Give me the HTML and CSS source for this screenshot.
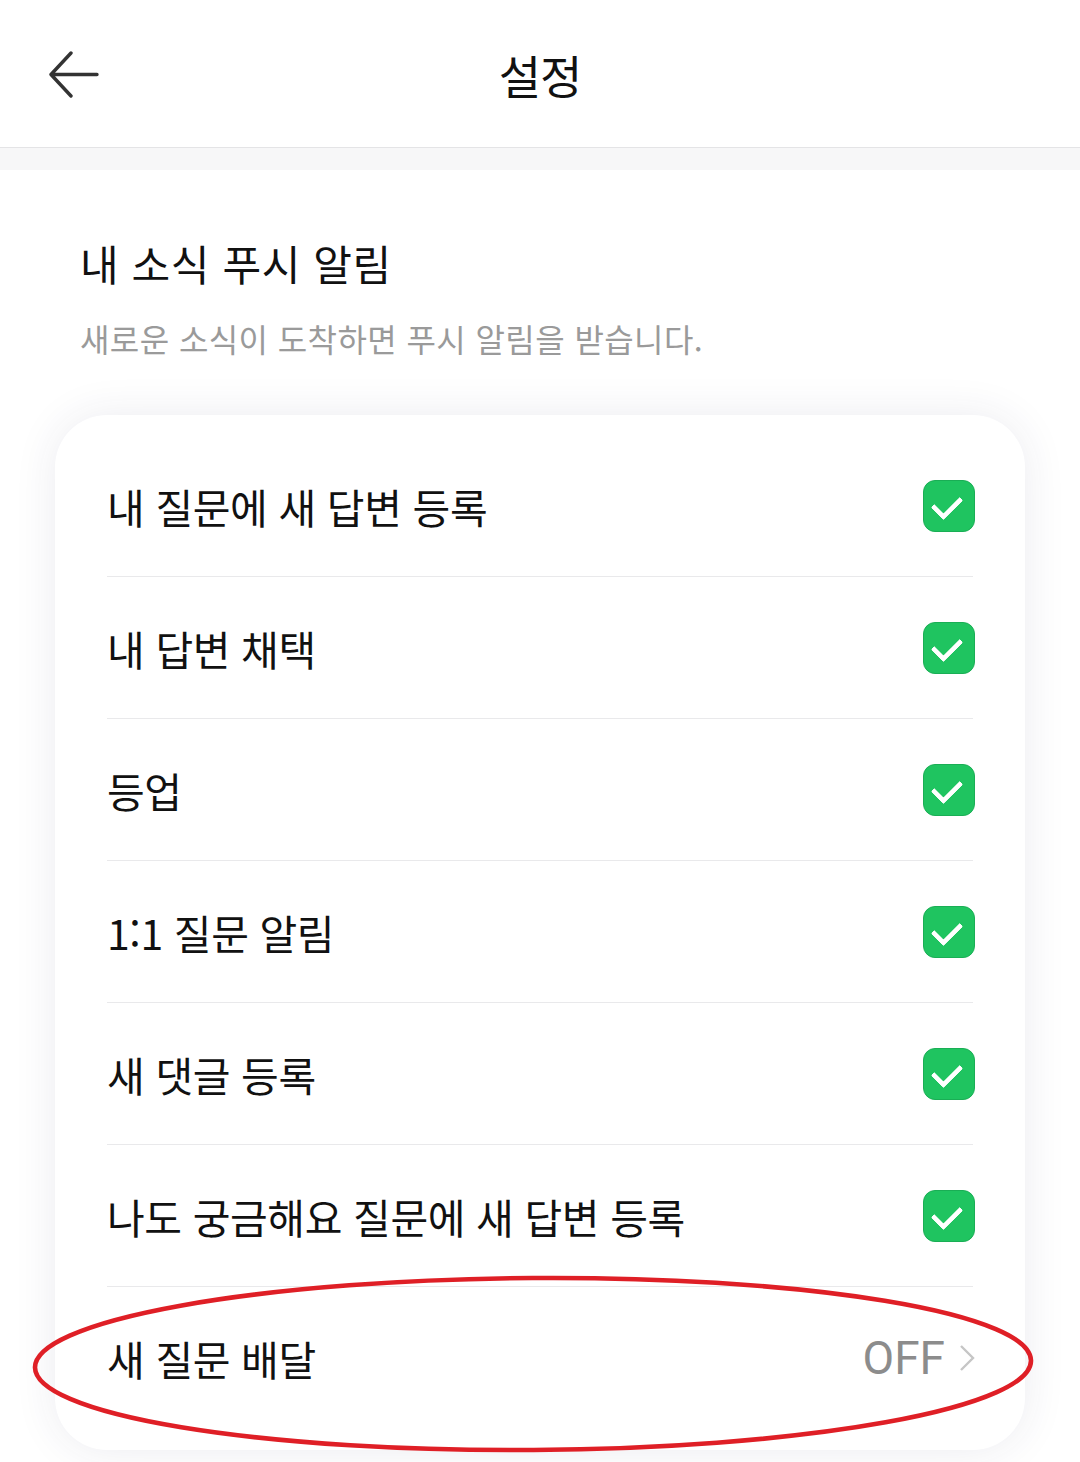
FILE: index.html
```html
<!DOCTYPE html>
<html lang="ko">
<head>
  <meta charset="UTF-8" />
  <meta name="viewport" content="width=device-width, initial-scale=1.0"/>
  <title>설정</title>
  <link rel="stylesheet" href="styles.css">
</head>
<body>
  <header class="topbar">
    <button class="back" aria-label="뒤로">
      <svg width="52" height="48" viewBox="0 0 52 48">
        <path d="M49 23.5H4M23 2 3 23.5 23 45" fill="none" stroke="#333" stroke-width="3.4" stroke-linecap="round" stroke-linejoin="round"/>
      </svg>
    </button>
    <h1>설정</h1>
  </header>
  <div class="band"></div>

  <main class="section">
    <h2>내 소식 푸시 알림</h2>
    <p class="desc">새로운 소식이 도착하면 푸시 알림을 받습니다.</p>

    <div class="card">
      <div class="row"><span>내 질문에 새 답변 등록</span><span class="check"></span></div>
      <div class="row"><span>내 답변 채택</span><span class="check"></span></div>
      <div class="row"><span>등업</span><span class="check"></span></div>
      <div class="row"><span>1:1 질문 알림</span><span class="check"></span></div>
      <div class="row"><span>새 댓글 등록</span><span class="check"></span></div>
      <div class="row"><span>나도 궁금해요 질문에 새 답변 등록</span><span class="check"></span></div>
      <div class="row">
        <span>새 질문 배달</span>
        <span class="state">OFF
          <svg width="18" height="28" viewBox="0 0 18 28"><path d="M3 2 15 14 3 26" fill="none" stroke="#c6c6c6" stroke-width="2.4"/></svg>
        </span>
      </div>
    </div>
  </main>

  <svg class="mark" width="1010" height="186" viewBox="0 0 1010 186">
    <ellipse cx="503" cy="92" rx="498" ry="86" fill="none" stroke="#df1f26" stroke-width="4.6" transform="rotate(-0.4 503 92)"/>
  </svg>
</body>
</html>
```

FILE: styles.css
```css
body {
  margin: 0;
  font-family: "Noto Sans CJK KR", "Noto Sans", sans-serif;
  background: #fff;
  color: #111;
}

.topbar {
  height: 147px;
  border-bottom: 1px solid #e4e4e6;
  display: flex;
  align-items: center;
  justify-content: center;
  position: relative;
}

.topbar h1 {
  margin: 0;
  font-size: 46px;
  font-weight: 400;
  letter-spacing: -1px;
}

.back {
  position: absolute;
  left: 48px;
  top: 51px;
  padding: 0;
  border: 0;
  background: none;
  display: flex;
}

.band {
  height: 22px;
  background: #f7f7f8;
}

.section {
  padding: 68px 0 12px;
}

.section h2 {
  margin: 0 0 0 80px;
  font-size: 42px;
  line-height: 50px;
  font-weight: 400;
  letter-spacing: 0.6px;
}

.desc {
  margin: 30px 0 0 80px;
  font-size: 32px;
  line-height: 40px;
  color: #9a9a9a;
  letter-spacing: 0.4px;
}

.card {
  margin: 57px 55px 0;
  padding: 20px 52px 22px;
  background: #fff;
  border-radius: 52px;
  box-shadow: 0 0 44px rgba(40, 40, 90, 0.09);
}

.row {
  height: 141px;
  display: flex;
  align-items: center;
  justify-content: space-between;
  border-bottom: 1px solid #e9e9eb;
  font-size: 41px;
  letter-spacing: -0.4px;
}

.row:last-child {
  border-bottom: 0;
}

.check {
  width: 50px;
  height: 50px;
  border-radius: 12px;
  background: #1fc460;
  border: 1px solid #1aae55;
  position: relative;
  margin-right: -2px;
}

.check::after {
  content: "";
  position: absolute;
  left: 14px;
  top: 9px;
  width: 13px;
  height: 23px;
  border: solid #fff;
  border-width: 0 5px 5px 0;
  transform: rotate(45deg);
  border-radius: 2px;
}

.state {
  font-family: Roboto, "Liberation Sans", sans-serif;
  font-size: 46px;
  color: #8c8c8c;
  letter-spacing: 0;
  display: flex;
  align-items: center;
  gap: 13px;
  margin-right: -3px;
}

.mark {
  position: absolute;
  left: 30px;
  top: 1272px;
}
```
